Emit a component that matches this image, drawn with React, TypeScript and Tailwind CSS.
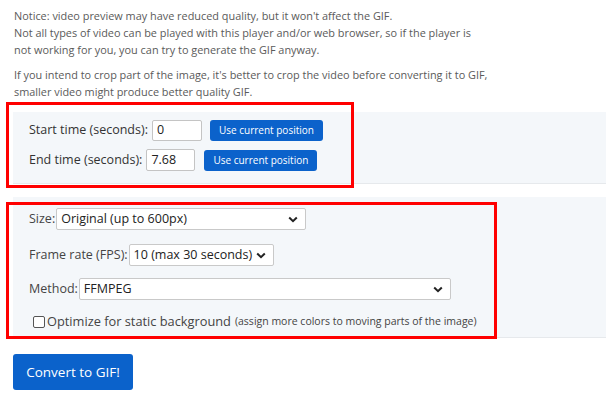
import React from "react";

const font = { fontFamily: '"Open Sans", "Noto Sans", sans-serif' };

function Chevron() {
  return (
    <svg width="10" height="7" viewBox="0 0 10 7" className="shrink-0">
      <path d="M1.2 1.5 L5 5.2 L8.8 1.5" fill="none" stroke="#222" strokeWidth="2" />
    </svg>
  );
}

function Select({ value, className }: { value: string; className: string }) {
  return (
    <div
      className={
        "flex h-[22px] items-center justify-between rounded-[2px] border border-[#c9c9c9] bg-white pl-[4px] pr-[7px] text-[12.5px] text-[#222] " +
        className
      }
    >
      <span>{value}</span>
      <Chevron />
    </div>
  );
}

function BlueBtn({ children }: { children: React.ReactNode }) {
  return (
    <div className="flex h-[21px] w-[113px] items-center justify-center rounded-[3px] bg-[#0b62cb] text-[10px] text-white">
      {children}
    </div>
  );
}

export default function App() {
  return (
    <div className="relative h-[402px] w-[606px] overflow-hidden bg-white" style={font}>
      <div className="pl-[14px] pt-[7px] text-[10.9px] leading-[17px] text-[#5a5a5a]">
        <p>Notice: video preview may have reduced quality, but it won't affect the GIF.</p>
        <p>Not all types of video can be played with this player and/or web browser, so if the player is</p>
        <p>not working for you, you can try to generate the GIF anyway.</p>
        <p className="mt-[8px]">
          If you intend to crop part of the image, it's better to crop the video before converting it to GIF,
        </p>
        <p>smaller video might produce better quality GIF.</p>
      </div>

      <div className="ml-[13px] mt-[12px] h-[72px] border-b border-[#e6e9ec] bg-[#f4f7fa] pl-[16px] pt-[8px] text-[12.5px] text-[#333]">
        <div className="flex items-center">
          <span>Start time (seconds):</span>
          <div className="ml-[4px] flex h-[21px] w-[50px] items-center rounded-[2px] border border-[#c4c4c4] bg-white pl-[4px] text-[#222]">
            0
          </div>
          <div className="ml-[8px]">
            <BlueBtn>Use current position</BlueBtn>
          </div>
        </div>
        <div className="mt-[8px] flex items-center">
          <span>End time (seconds):</span>
          <div className="ml-[4px] flex h-[22px] w-[49px] items-center rounded-[2px] border border-[#c4c4c4] bg-white pl-[4px] text-[#222]">
            7.68
          </div>
          <div className="ml-[9px]">
            <BlueBtn>Use current position</BlueBtn>
          </div>
        </div>
      </div>

      <div className="ml-[13px] mt-[13px] h-[141px] border-b border-[#e6e9ec] bg-[#f4f7fa] pl-[16px] pt-[11px] text-[12.5px] text-[#444]">
        <div className="flex items-center">
          <span>Size:</span>
          <Select value="Original (up to 600px)" className="ml-[1px] w-[250px]" />
        </div>
        <div className="mt-[14px] flex items-center">
          <span>Frame rate (FPS):</span>
          <Select value="10 (max 30 seconds)" className="ml-[1px] w-[145px]" />
        </div>
        <div className="mt-[12px] flex items-center">
          <span>Method:</span>
          <Select value="FFMPEG" className="ml-[1px] w-[372px]" />
        </div>
        <div className="mt-[12px] flex items-center pl-[4px]">
          <div className="h-[12px] w-[12px] rounded-[2px] border border-[#555] bg-white" />
          <span className="ml-[2px] text-[12.8px]">Optimize for static background</span>
          <span className="ml-[4px] text-[10.5px]">(assign more colors to moving parts of the image)</span>
        </div>
      </div>

      <div className="ml-[13px] mt-[16px] flex h-[36px] w-[120px] items-center justify-center rounded-[3px] bg-[#0b62cb] text-[13.5px] text-white">
        Convert to GIF!
      </div>

      <div className="absolute left-[6px] top-[102px] h-[86px] w-[348px] border-[3px] border-[#ff0000]" />
      <div className="absolute left-[6px] top-[202px] h-[137px] w-[491px] border-[3px] border-[#ff0000]" />
    </div>
  );
}
